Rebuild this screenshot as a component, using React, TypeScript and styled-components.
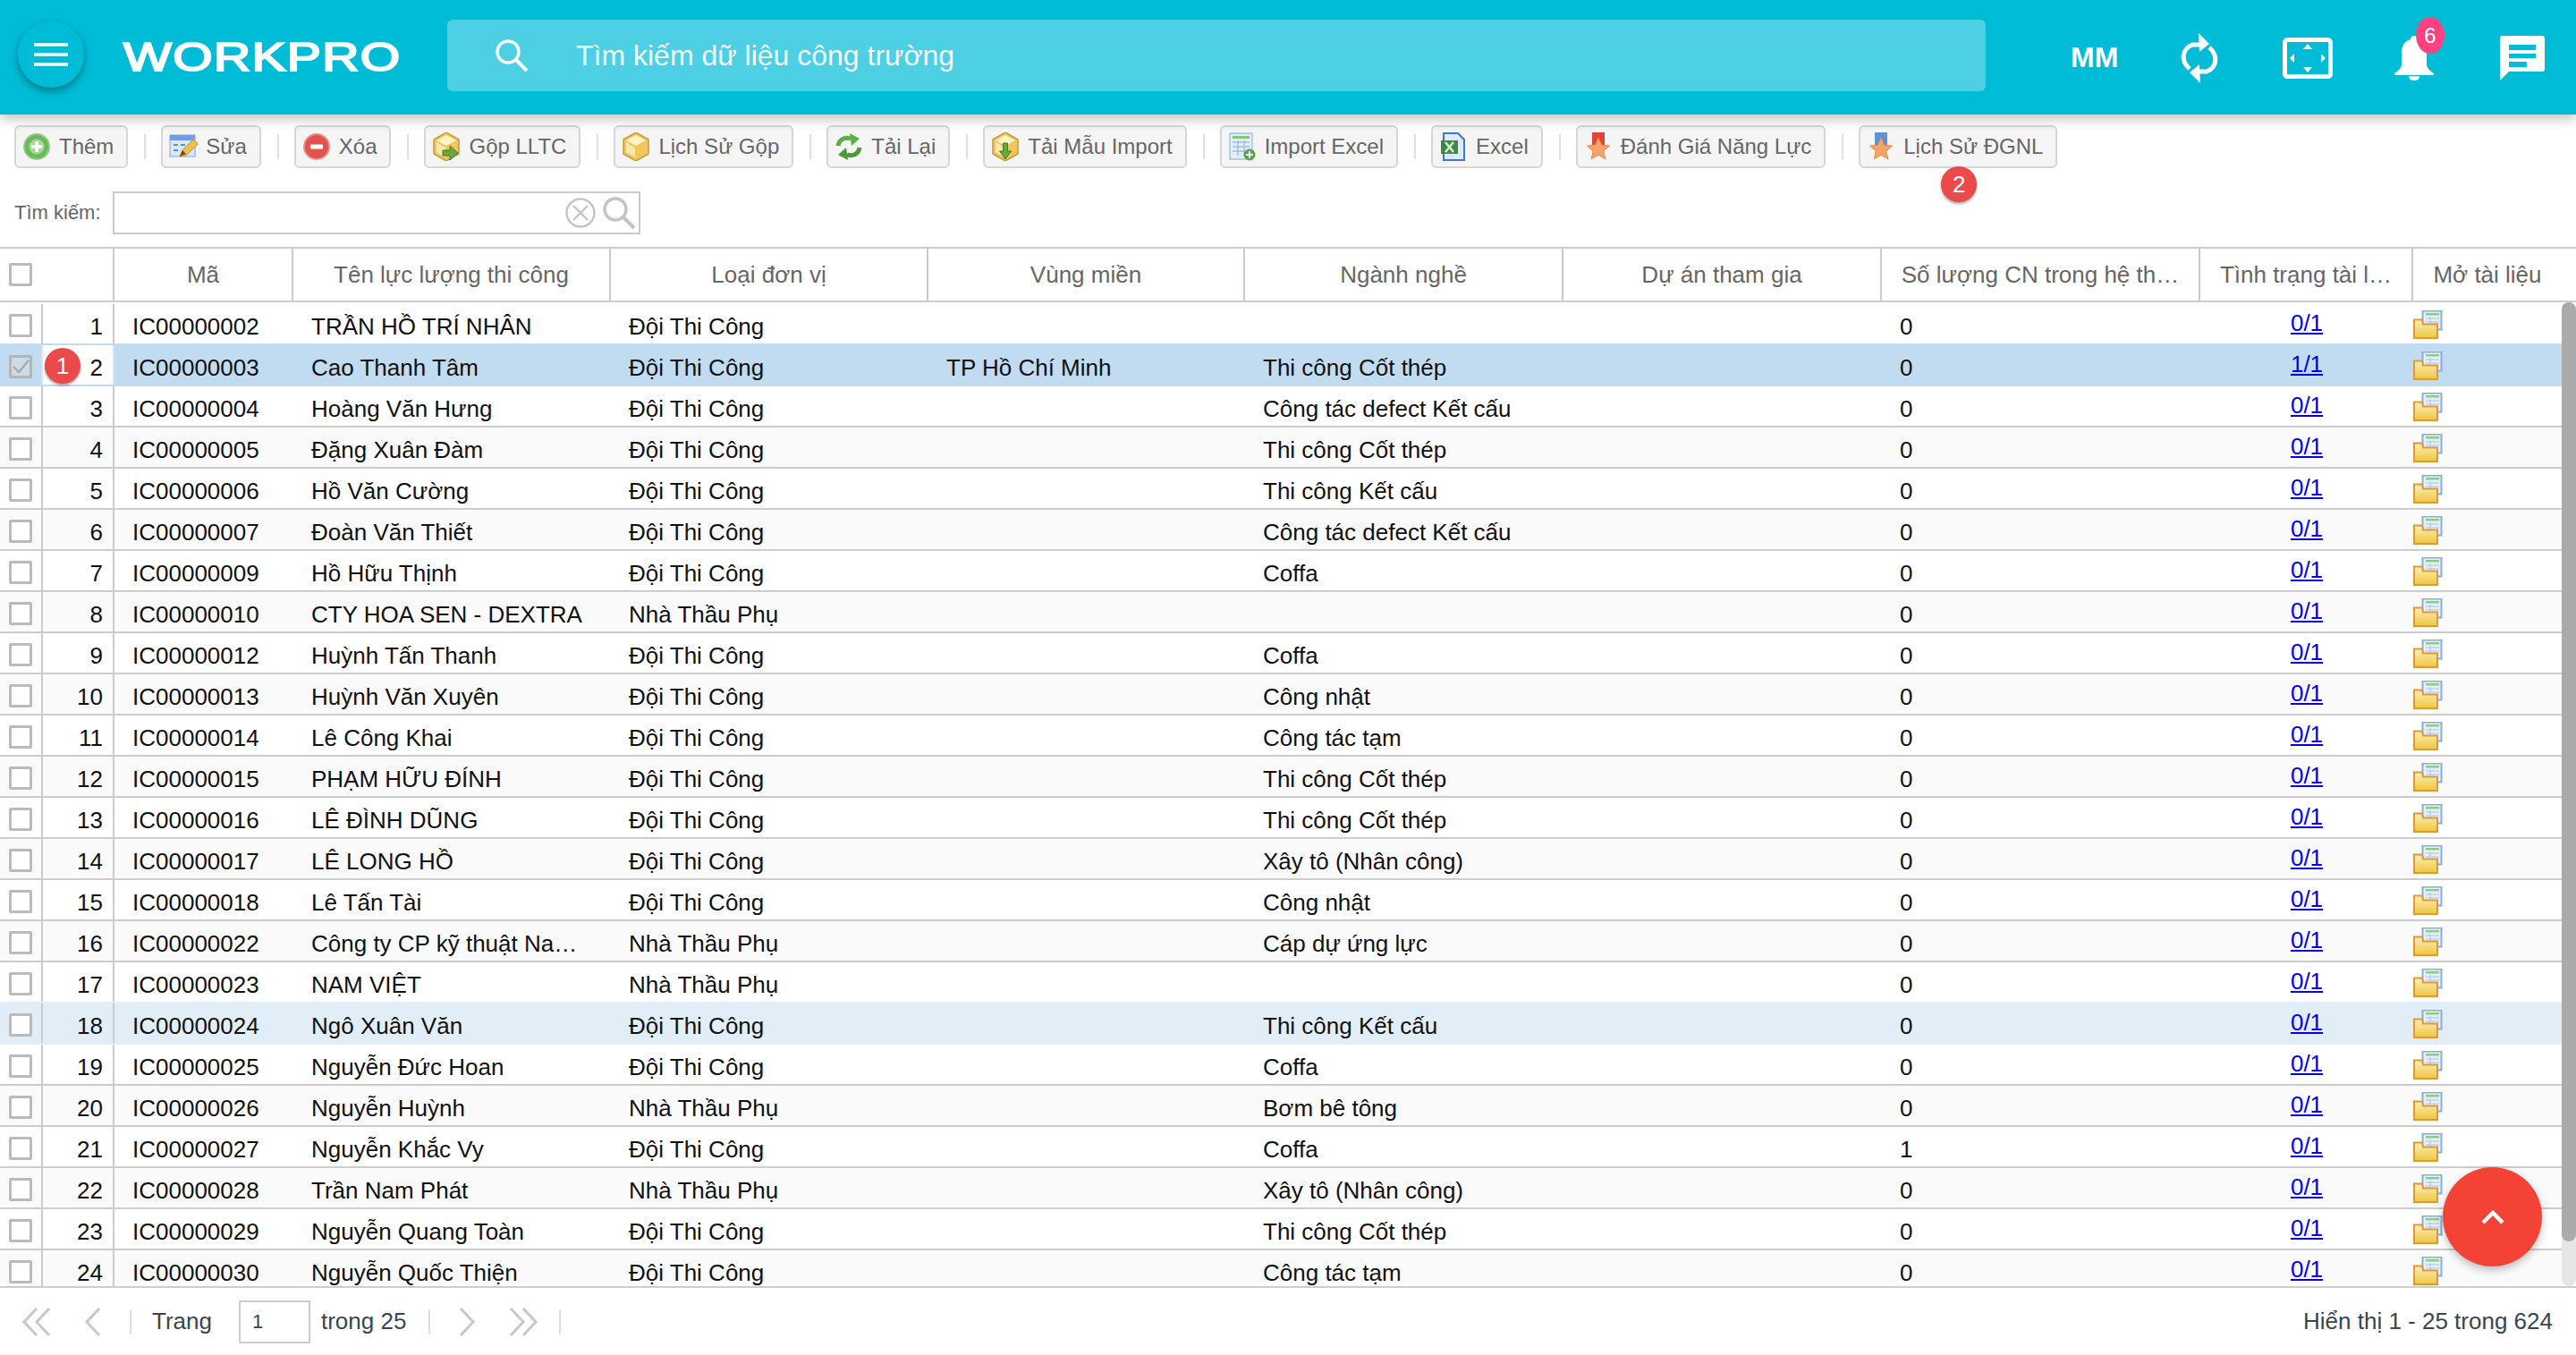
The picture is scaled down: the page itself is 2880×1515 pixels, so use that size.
import React from "react";
import styled, { createGlobalStyle } from "styled-components";

const GlobalStyle = createGlobalStyle`
  html, body { margin: 0; padding: 0; background: #fff; overflow: hidden; }
  body { font-family: "Liberation Sans", Arial, sans-serif; }
  * { box-sizing: border-box; }
`;

const COLS = [128, 200, 355, 355, 354, 356, 356, 356, 238, 182];

const Page = styled.div`
  width: 2880px;
  height: 1515px;
  display: flex;
  flex-direction: column;
  position: relative;
  overflow: hidden;
`;

const TopBar = styled.header`
  height: 128px;
  flex: none;
  background: #00bcd6;
  display: flex;
  align-items: center;
  position: relative;
  z-index: 3;
  box-shadow: 0 4px 14px rgba(0, 0, 0, 0.28);
  padding-left: 20px;
`;

const MenuButton = styled.div`
  width: 74px;
  height: 74px;
  border-radius: 50%;
  background: #00bcd6;
  box-shadow: 0 4px 10px rgba(0, 0, 0, 0.35);
  display: flex;
  align-items: center;
  justify-content: center;
  margin-top: -6px;
  flex: none;
`;

const LogoBox = styled.div`
  width: 310px;
  margin-left: 44px;
  flex: none;
`;

const Logo = styled.div`
  display: inline-block;
  color: #fff;
  font-size: 45px;
  line-height: 46px;
  font-weight: 400;
  letter-spacing: 1px;
  -webkit-text-stroke: 2px #fff;
  transform: scaleX(1.27);
  transform-origin: left center;
`;

const SearchBox = styled.div`
  width: 1720px;
  height: 80px;
  margin-left: 52px;
  margin-top: -4px;
  background: #4dd0e4;
  border-radius: 6px;
  display: flex;
  align-items: center;
  padding-left: 53px;
  flex: none;
`;

const SearchHint = styled.span`
  margin-left: 53px;
  color: #fff;
  font-size: 32px;
  opacity: 0.92;
`;

const UserInitials = styled.span`
  margin-left: 95px;
  margin-top: 0;
  width: 55px;
  color: #fff;
  font-size: 32px;
  font-weight: 700;
  flex: none;
`;

const TopIcons = styled.div`
  display: flex;
  align-items: center;
  margin-top: 2px;
  margin-left: 67px;
`;

const IconSlot = styled.div<{ $w: number; $mr: number }>`
  width: ${(p) => p.$w}px;
  margin-right: ${(p) => p.$mr}px;
  position: relative;
  display: flex;
  flex: none;
`;

const NotifyBadge = styled.span`
  position: absolute;
  left: 24px;
  top: -21px;
  width: 32px;
  height: 41px;
  border-radius: 50%;
  background: #ff4081;
  color: #fff;
  font-size: 24px;
  display: flex;
  align-items: center;
  justify-content: center;
`;

const Toolbar = styled.div`
  display: flex;
  align-items: center;
  margin-top: 12px;
  padding-left: 16px;
  height: 48px;
  flex: none;
`;

const ToolButton = styled.div`
  height: 48px;
  position: relative;
  display: flex;
  align-items: center;
  padding: 0 14px 0 7px;
  background: #f5f5f5;
  border: 2px solid #d6d6d6;
  border-radius: 6px;
  color: #666;
  font-size: 24px;
  white-space: nowrap;
  flex: none;
`;

const ToolIcon = styled.span`
  width: 32px;
  height: 32px;
  margin-right: 9px;
  display: flex;
  flex: none;
`;

const ToolSep = styled.span`
  width: 2px;
  height: 28px;
  margin: 0 17px 0 18px;
  background: #e0e0e0;
  flex: none;
`;

const StepBadge = styled.span`
  width: 40px;
  height: 40px;
  border-radius: 50%;
  background: #ea4a4a;
  color: #fff;
  font-size: 26px;
  display: flex;
  align-items: center;
  justify-content: center;
  box-shadow: 0 2px 3px rgba(0, 0, 0, 0.35);
  position: absolute;
  z-index: 2;
`;

const ToolStep = styled(StepBadge)`
  left: 90px;
  top: 44px;
`;

const RowStep = styled(StepBadge)`
  left: 2px;
  top: 3px;
`;

const FilterRow = styled.div`
  display: flex;
  align-items: center;
  height: 48px;
  margin-top: 26px;
  padding-left: 16px;
  flex: none;
`;

const FilterLabel = styled.span`
  width: 110px;
  color: #666;
  font-size: 22px;
  flex: none;
`;

const FilterInput = styled.div`
  width: 590px;
  height: 48px;
  border: 2px solid #ccc;
  background: #fff;
  display: flex;
  align-items: center;
  justify-content: flex-end;
  gap: 6px;
  padding-right: 3px;
`;

const GridHead = styled.div`
  margin-top: 14px;
  height: 62px;
  border-top: 2px solid #ccc;
  border-bottom: 2px solid #ccc;
  display: flex;
  flex: none;
`;

const HeadCell = styled.div<{ $w: number }>`
  width: ${(p) => p.$w}px;
  border-right: 2px solid #ccc;
  color: #666;
  font-size: 26px;
  display: flex;
  align-items: center;
  justify-content: center;
  white-space: nowrap;
  overflow: hidden;
  flex: none;
  &:last-child {
    border-right: 0;
    padding-right: 16px;
  }
`;

const CheckHead = styled(HeadCell)`
  justify-content: flex-start;
  padding-left: 10px;
`;

const GridBody = styled.div`
  height: 1100px;
  display: flex;
  flex: none;
  overflow: hidden;
`;

const Rows = styled.div`
  width: 2864px;
  height: 1100px;
  overflow: hidden;
  flex: none;
`;

const Row = styled.div<{ $alt: boolean; $state?: "selected" | "hover" }>`
  height: 46px;
  display: flex;
  position: relative;
  background: ${(p) =>
    p.$state === "selected" ? "#c1dbf1" : p.$state === "hover" ? "#e1edf7" : p.$alt ? "#fafafa" : "#fff"};
  border-top: 2px solid ${(p) => (p.$state === "selected" ? "#c1dbf1" : p.$state === "hover" ? "#e1edf7" : "#ccc")};
  box-shadow: ${(p) => (p.$state === "selected" ? "0 2px 0 #c1dbf1" : p.$state === "hover" ? "0 2px 0 #e1edf7" : "none")};
  z-index: ${(p) => (p.$state ? 1 : 0)};
  &:first-child { border-top-color: #fff; }
`;

const CheckCell = styled.div`
  width: 46px;
  display: flex;
  align-items: center;
  padding: 3px 0 0 10px;
  flex: none;
`;

const Box = styled.span<{ $muted?: boolean }>`
  width: 26px;
  height: 26px;
  border: 3px solid ${(p) => (p.$muted ? "#b5b5b5" : "#bbb")};
  border-radius: 2px;
  background: ${(p) => (p.$muted ? "#c9dcec" : "#fff")};
  display: flex;
  flex: none;
`;

const NumCell = styled.div<{ $white?: boolean }>`
  width: 82px;
  border-left: 2px solid ${(p) => (p.$white ? "#d6e6f4" : "#ccc")};
  border-right: 2px solid ${(p) => (p.$white ? "#d6e6f4" : "#ccc")};
  background: ${(p) => (p.$white ? "#fff" : "transparent")};
  position: relative;
  color: #111;
  font-size: 26px;
  text-align: right;
  line-height: 50px;
  padding-right: 11px;
  flex: none;
`;

const Cell = styled.div<{ $w: number }>`
  width: ${(p) => p.$w}px;
  padding: 0 10px 0 20px;
  color: #111;
  font-size: 26px;
  line-height: 50px;
  white-space: nowrap;
  overflow: hidden;
  text-overflow: ellipsis;
  flex: none;
`;

const LinkCell = styled.div<{ $w: number }>`
  width: ${(p) => p.$w}px;
  text-align: center;
  font-size: 26px;
  line-height: 42px;
  flex: none;
`;

const DocLink = styled.a`
  color: #0000ee;
  text-decoration: underline;
`;

const FolderCell = styled.div`
  padding: 7px 0 0 0;
  display: flex;
  flex: none;
`;

const ScrollTrack = styled.div`
  width: 16px;
  height: 1100px;
  background: #e6e6e6;
  border-radius: 8px;
  flex: none;
`;

const ScrollThumb = styled.div`
  height: 1050px;
  background: #aaa;
  border-radius: 8px;
`;

const Footer = styled.footer`
  flex: 1;
  border-top: 2px solid #ccc;
  display: flex;
  align-items: center;
  color: #37474f;
  font-size: 26px;
  padding: 0 26px 0 24px;
`;

const PagerIcon = styled.span<{ $w: number; $mr: number }>`
  width: ${(p) => p.$w}px;
  margin-right: ${(p) => p.$mr}px;
  display: flex;
  flex: none;
`;

const PagerSep = styled.span<{ $mr: number }>`
  width: 2px;
  height: 28px;
  background: #ddd;
  margin-right: ${(p) => p.$mr}px;
  flex: none;
`;

const PageInput = styled.div`
  width: 80px;
  height: 48px;
  border: 2px solid #ccc;
  margin: 0 12px 0 30px;
  padding-left: 13px;
  font-size: 22px;
  line-height: 44px;
  flex: none;
`;

const FooterText = styled.span<{ $mr?: number }>`
  margin-right: ${(p) => p.$mr ?? 0}px;
  white-space: nowrap;
  flex: none;
`;

const Summary = styled.span`
  margin-left: auto;
  white-space: nowrap;
`;

const ScrollTop = styled.div`
  position: absolute;
  left: 2731px;
  top: 1305px;
  width: 111px;
  height: 111px;
  border-radius: 50%;
  background: #f44336;
  box-shadow: 0 4px 10px rgba(0, 0, 0, 0.25);
  display: flex;
  align-items: center;
  justify-content: center;
  z-index: 4;
`;

type IconProps = { size?: number };

const MenuIcon = () => (
  <svg width="38" height="26" viewBox="0 0 38 26">
    <path d="M0 2h38M0 13h38M0 24h38" stroke="#fff" strokeWidth="3.4" />
  </svg>
);

const SearchGlass = ({ color = "#fff", size = 38 }: { color?: string; size?: number }) => (
  <svg width={size} height={size} viewBox="0 0 38 38" fill="none">
    <circle cx="15" cy="15" r="12" stroke={color} strokeWidth="3.4" />
    <path d="M24 24l12 12" stroke={color} strokeWidth="4" />
  </svg>
);

const RefreshIcon = () => (
  <svg width="44" height="56" viewBox="0 0 44 56" fill="none">
    <path d="M11 40C1 31 2 18 14 13h9" stroke="#fff" strokeWidth="5" />
    <path d="M21 0l12 12-11 9z" fill="#fff" />
    <path d="M33 16c10 9 9 22-3 27h-9" stroke="#fff" strokeWidth="5" />
    <path d="M23 56L11 44l11-9z" fill="#fff" />
  </svg>
);

const FullscreenIcon = () => (
  <svg width="56" height="46" viewBox="0 0 56 46" fill="none">
    <rect x="2.5" y="2.5" width="51" height="41" rx="3" stroke="#fff" strokeWidth="5" />
    <path d="M28 7l5 6H23zM28 39l5-6H23zM8 23l5-5v10zM48 23l-5-5v10z" fill="#fff" />
  </svg>
);

const BellIcon = () => (
  <svg width="44" height="50" viewBox="0 0 44 50">
    <path d="M22 0c3 0 4 2 4 4 7 2 10 8 10 15v13c0 3 2 6 8 10v2H0v-2c6-4 8-7 8-10V19C8 12 11 6 18 4c0-2 1-4 4-4z" fill="#fff" />
    <path d="M16 45h12c0 3-2 5-6 5s-6-2-6-5z" fill="#fff" />
  </svg>
);

const ChatIcon = () => (
  <svg width="50" height="50" viewBox="0 0 50 50">
    <path d="M3 0h44c2 0 3 1 3 3v34c0 2-1 3-3 3H10L0 50V3C0 1 1 0 3 0z" fill="#fff" />
    <path d="M10 10h30v6H10zM10 20h30v5H10zM10 29h20v6H10z" fill="#00bcd6" />
  </svg>
);

const AddIcon = ({ size = 32 }: IconProps) => (
  <svg width={size} height={size} viewBox="0 0 32 32">
    <circle cx="16" cy="16" r="14" fill="#6bb85c" stroke="#8ccf7e" strokeWidth="2" />
    <circle cx="16" cy="16" r="8.5" fill="#a5d99a" />
    <path d="M16 10v12M10 16h12" stroke="#fff" strokeWidth="4" />
  </svg>
);

const EditIcon = ({ size = 32 }: IconProps) => (
  <svg width={size} height={size} viewBox="0 0 32 32">
    <rect x="1" y="3" width="28" height="24" fill="#dbe8f8" stroke="#7fa6d9" />
    <rect x="1" y="3" width="28" height="6" fill="#6f9fe0" />
    <path d="M5 14h5M13 14h5M5 20h5" stroke="#5c8ed0" strokeWidth="2" />
    <path d="M12 27l3-7 12-12 5 5-12 12z" fill="#f0c14b" stroke="#c98f20" />
    <path d="M12 27l3-7 4 4z" fill="#7a4a20" />
  </svg>
);

const RemoveIcon = ({ size = 32 }: IconProps) => (
  <svg width={size} height={size} viewBox="0 0 32 32">
    <circle cx="16" cy="16" r="14" fill="#e2534e" stroke="#f08c86" strokeWidth="2" />
    <rect x="9" y="13.5" width="14" height="5" rx="1" fill="#fff" />
  </svg>
);

const Gem = () => (
  <g>
    <path d="M16 0l14 8v16l-14 8-14-8V8z" fill="#f0c75e" stroke="#c99a3a" strokeWidth="1.5" />
    <path d="M16 3l11 6-11 6-11-6z" fill="#fff2c4" />
    <path d="M5 11l10 6v11L5 22z" fill="#f9e7ae" />
  </g>
);

const MergeIcon = ({ size = 32 }: IconProps) => (
  <svg width={size} height={size} viewBox="0 0 32 32">
    <Gem />
    <path d="M12 20h8v-5l9 8-9 8v-5h-8z" fill="#68a83c" stroke="#3f7f22" />
  </svg>
);

const BoxIcon = ({ size = 32 }: IconProps) => (
  <svg width={size} height={size} viewBox="0 0 32 32">
    <Gem />
  </svg>
);

const ReloadIcon = ({ size = 32 }: IconProps) => (
  <svg width={size} height={size} viewBox="0 0 32 32" fill="none">
    <path d="M4 15c1-7 7-10 14-8" stroke="#5fae45" strokeWidth="5" />
    <path d="M17 1l11 6-9 8z" fill="#5fae45" />
    <path d="M28 17c-1 7-7 10-14 8" stroke="#4d9a38" strokeWidth="5" />
    <path d="M15 31L4 25l9-8z" fill="#4d9a38" />
  </svg>
);

const TemplateIcon = ({ size = 32 }: IconProps) => (
  <svg width={size} height={size} viewBox="0 0 32 32">
    <Gem />
    <path d="M13.5 12h5v9h4l-6.5 9-6.5-9h4z" fill="#68a83c" stroke="#3f7f22" />
  </svg>
);

const ImportIcon = ({ size = 32 }: IconProps) => (
  <svg width={size} height={size} viewBox="0 0 32 32">
    <rect x="2" y="1" width="25" height="29" fill="#e3edf9" stroke="#86a9d6" />
    <rect x="5" y="4" width="19" height="3" fill="#84c878" />
    <path d="M5 11h19M5 16h19M5 21h19M11 9v17M18 9v17" stroke="#a3bfe2" strokeWidth="1.5" />
    <circle cx="24" cy="25" r="6.5" fill="#5aa548" />
    <path d="M24 21v8M20 25h8" stroke="#fff" strokeWidth="2" />
  </svg>
);

const ExcelIcon = ({ size = 32 }: IconProps) => (
  <svg width={size} height={size} viewBox="0 0 32 32">
    <path d="M5 1h16l7 7v23H5z" fill="#dfeafa" stroke="#3f78c8" strokeWidth="2" />
    <path d="M2 9h19v15H2z" fill="#3c8a45" />
    <path d="M7 11l9 11M16 11l-9 11" stroke="#d6f0d6" strokeWidth="2.5" />
  </svg>
);

const MedalIcon = ({ ribbon, size = 32 }: IconProps & { ribbon: string }) => (
  <svg width={size} height={size} viewBox="0 0 32 32">
    <rect x="9" y="0" width="14" height="15" fill={ribbon} />
    <path d="M16 6l3.6 8.2 9 .8-6.8 6 2 8.8L16 25.2 8.2 29.8l2-8.8-6.8-6 9-.8z" fill="#f4a46a" stroke="#eb8d4c" />
  </svg>
);

const RedMedal = (p: IconProps) => <MedalIcon ribbon="#e4423c" {...p} />;
const BlueMedal = (p: IconProps) => <MedalIcon ribbon="#5f92cf" {...p} />;

const FolderDocIcon = () => (
  <svg width="33" height="32" viewBox="0 0 33 32">
    <defs>
      <linearGradient id="folderFill" x1="0" y1="0" x2="0" y2="1">
        <stop offset="0" stopColor="#fbeeb8" />
        <stop offset="1" stopColor="#f0c63f" />
      </linearGradient>
    </defs>
    <rect x="10.5" y="0.5" width="21" height="21" fill="#e6effa" stroke="#86aee0" strokeWidth="2" />
    <rect x="14" y="3" width="15" height="2.5" fill="#8ccb80" />
    <path d="M14 9h15M14 13h15M19 7v12" stroke="#a9c3e6" />
    <path d="M1 10.5h9l1 5h16v15.5H1z" fill="url(#folderFill)" stroke="#dd993f" strokeWidth="2" />
  </svg>
);

const ClearIcon = () => (
  <svg width="36" height="36" viewBox="0 0 36 36" fill="none" stroke="#c4c4c4" strokeWidth="2.4">
    <circle cx="18" cy="18" r="15.5" />
    <path d="M10 10l16 16M26 10L10 26" />
  </svg>
);

const CheckMark = () => (
  <svg width="20" height="20" viewBox="0 0 20 20" fill="none">
    <path d="M2 10l6 6L19 3" stroke="#aaa" strokeWidth="2.4" />
  </svg>
);

const ChevronPair = ({ dir, double }: { dir: "l" | "r"; double?: boolean }) => {
  const one = dir === "l" ? "M17 1L3 16l14 15" : "M3 1l14 15L3 31";
  const two = dir === "l" ? "M31 1L17 16l14 15" : "M17 1l14 15-14 15";
  return (
    <svg width={double ? 34 : 20} height="32" viewBox={`0 0 ${double ? 34 : 20} 32`} fill="none" stroke="#c8c8c8" strokeWidth="3">
      <path d={one} />
      {double && <path d={two} />}
    </svg>
  );
};

const tools: { label: string; Icon: React.FC<IconProps> }[] = [
  { label: "Thêm", Icon: AddIcon },
  { label: "Sửa", Icon: EditIcon },
  { label: "Xóa", Icon: RemoveIcon },
  { label: "Gộp LLTC", Icon: MergeIcon },
  { label: "Lịch Sử Gộp", Icon: BoxIcon },
  { label: "Tải Lại", Icon: ReloadIcon },
  { label: "Tải Mẫu Import", Icon: TemplateIcon },
  { label: "Import Excel", Icon: ImportIcon },
  { label: "Excel", Icon: ExcelIcon },
  { label: "Đánh Giá Năng Lực", Icon: RedMedal },
  { label: "Lịch Sử ĐGNL", Icon: BlueMedal },
];

const headers = [
  "Mã",
  "Tên lực lượng thi công",
  "Loại đơn vị",
  "Vùng miền",
  "Ngành nghề",
  "Dự án tham gia",
  "Số lượng CN trong hệ th…",
  "Tình trạng tài l…",
  "Mở tài liệu",
];

const DOI = "Đội Thi Công";
const NTP = "Nhà Thầu Phụ";
const COT = "Thi công Cốt thép";
const DEF = "Công tác defect Kết cấu";
const KC = "Thi công Kết cấu";
const XAY = "Xây tô (Nhân công)";
const TAM = "Công tác tạm";
const NHAT = "Công nhật";

const data: [string, string, string, string, string][] = [
  ["00002", "TRẦN HỒ TRÍ NHÂN", DOI, "", ""],
  ["00003", "Cao Thanh Tâm", DOI, "TP Hồ Chí Minh", COT],
  ["00004", "Hoàng Văn Hưng", DOI, "", DEF],
  ["00005", "Đặng Xuân Đàm", DOI, "", COT],
  ["00006", "Hồ Văn Cường", DOI, "", KC],
  ["00007", "Đoàn Văn Thiết", DOI, "", DEF],
  ["00009", "Hồ Hữu Thịnh", DOI, "", "Coffa"],
  ["00010", "CTY HOA SEN - DEXTRA", NTP, "", ""],
  ["00012", "Huỳnh Tấn Thanh", DOI, "", "Coffa"],
  ["00013", "Huỳnh Văn Xuyên", DOI, "", NHAT],
  ["00014", "Lê Công Khai", DOI, "", TAM],
  ["00015", "PHẠM HỮU ĐÍNH", DOI, "", COT],
  ["00016", "LÊ ĐÌNH DŨNG", DOI, "", COT],
  ["00017", "LÊ LONG HỒ", DOI, "", XAY],
  ["00018", "Lê Tấn Tài", DOI, "", NHAT],
  ["00022", "Công ty CP kỹ thuật Na…", NTP, "", "Cáp dự ứng lực"],
  ["00023", "NAM VIỆT", NTP, "", ""],
  ["00024", "Ngô Xuân Văn", DOI, "", KC],
  ["00025", "Nguyễn Đức Hoan", DOI, "", "Coffa"],
  ["00026", "Nguyễn Huỳnh", NTP, "", "Bơm bê tông"],
  ["00027", "Nguyễn Khắc Vy", DOI, "", "Coffa"],
  ["00028", "Trần Nam Phát", NTP, "", XAY],
  ["00029", "Nguyễn Quang Toàn", DOI, "", COT],
  ["00030", "Nguyễn Quốc Thiện", DOI, "", TAM],
];

const App: React.FC = () => {
  return (
    <Page>
      <GlobalStyle />
      <TopBar>
        <MenuButton>
          <MenuIcon />
        </MenuButton>
        <LogoBox>
          <Logo>WORKPRO</Logo>
        </LogoBox>
        <SearchBox>
          <SearchGlass />
          <SearchHint>Tìm kiếm dữ liệu công trường</SearchHint>
        </SearchBox>
        <UserInitials>MM</UserInitials>
        <TopIcons>
          <IconSlot $w={44} $mr={71}>
            <RefreshIcon />
          </IconSlot>
          <IconSlot $w={56} $mr={69}>
            <FullscreenIcon />
          </IconSlot>
          <IconSlot $w={44} $mr={74}>
            <BellIcon />
            <NotifyBadge>6</NotifyBadge>
          </IconSlot>
          <IconSlot $w={50} $mr={0}>
            <ChatIcon />
          </IconSlot>
        </TopIcons>
      </TopBar>

      <Toolbar>
        {tools.map(({ label, Icon }, i) => (
          <React.Fragment key={label}>
            {i > 0 && <ToolSep />}
            <ToolButton>
              <ToolIcon>
                <Icon />
              </ToolIcon>
              {label}
              {label === "Lịch Sử ĐGNL" && <ToolStep>2</ToolStep>}
            </ToolButton>
          </React.Fragment>
        ))}
      </Toolbar>

      <FilterRow>
        <FilterLabel>Tìm kiếm:</FilterLabel>
        <FilterInput>
          <ClearIcon />
          <SearchGlass color="#c4c4c4" size={38} />
        </FilterInput>
      </FilterRow>

      <GridHead>
        <CheckHead $w={COLS[0]}>
          <Box />
        </CheckHead>
        {headers.map((h, i) => (
          <HeadCell key={h} $w={COLS[i + 1]}>
            {h}
          </HeadCell>
        ))}
      </GridHead>

      <GridBody>
        <Rows>
          {data.map((r, i) => {
            const n = i + 1;
            const selected = n === 2;
            const state = selected ? "selected" : n === 18 ? "hover" : undefined;
            return (
              <Row key={r[0]} $alt={n % 2 === 0} $state={state}>
                <CheckCell>
                  <Box $muted={selected}>{selected && <CheckMark />}</Box>
                </CheckCell>
                <NumCell $white={selected}>
                  {selected && <RowStep>1</RowStep>}
                  {n}
                </NumCell>
                <Cell $w={COLS[1]}>IC000{r[0]}</Cell>
                <Cell $w={COLS[2]}>{r[1]}</Cell>
                <Cell $w={COLS[3]}>{r[2]}</Cell>
                <Cell $w={COLS[4]}>{r[3]}</Cell>
                <Cell $w={COLS[5]}>{r[4]}</Cell>
                <Cell $w={COLS[6]} />
                <Cell $w={COLS[7]}>{n === 21 ? 1 : 0}</Cell>
                <LinkCell $w={COLS[8]}>
                  <DocLink>{selected ? "1/1" : "0/1"}</DocLink>
                </LinkCell>
                <FolderCell>
                  <FolderDocIcon />
                </FolderCell>
              </Row>
            );
          })}
        </Rows>
        <ScrollTrack>
          <ScrollThumb />
        </ScrollTrack>
      </GridBody>

      <Footer>
        <PagerIcon $w={34} $mr={36}>
          <ChevronPair dir="l" double />
        </PagerIcon>
        <PagerIcon $w={20} $mr={31}>
          <ChevronPair dir="l" />
        </PagerIcon>
        <PagerSep $mr={23} />
        <FooterText>Trang</FooterText>
        <PageInput>1</PageInput>
        <FooterText $mr={25}>trong 25</FooterText>
        <PagerSep $mr={31} />
        <PagerIcon $w={20} $mr={36}>
          <ChevronPair dir="r" />
        </PagerIcon>
        <PagerIcon $w={34} $mr={23}>
          <ChevronPair dir="r" double />
        </PagerIcon>
        <PagerSep $mr={0} />
        <Summary>Hiển thị 1 - 25 trong 624</Summary>
      </Footer>

      <ScrollTop>
        <svg width="26" height="16" viewBox="0 0 26 16" fill="none">
          <path d="M2 14L13 3l11 11" stroke="#fff" strokeWidth="4.5" />
        </svg>
      </ScrollTop>
    </Page>
  );
};

export default App;
